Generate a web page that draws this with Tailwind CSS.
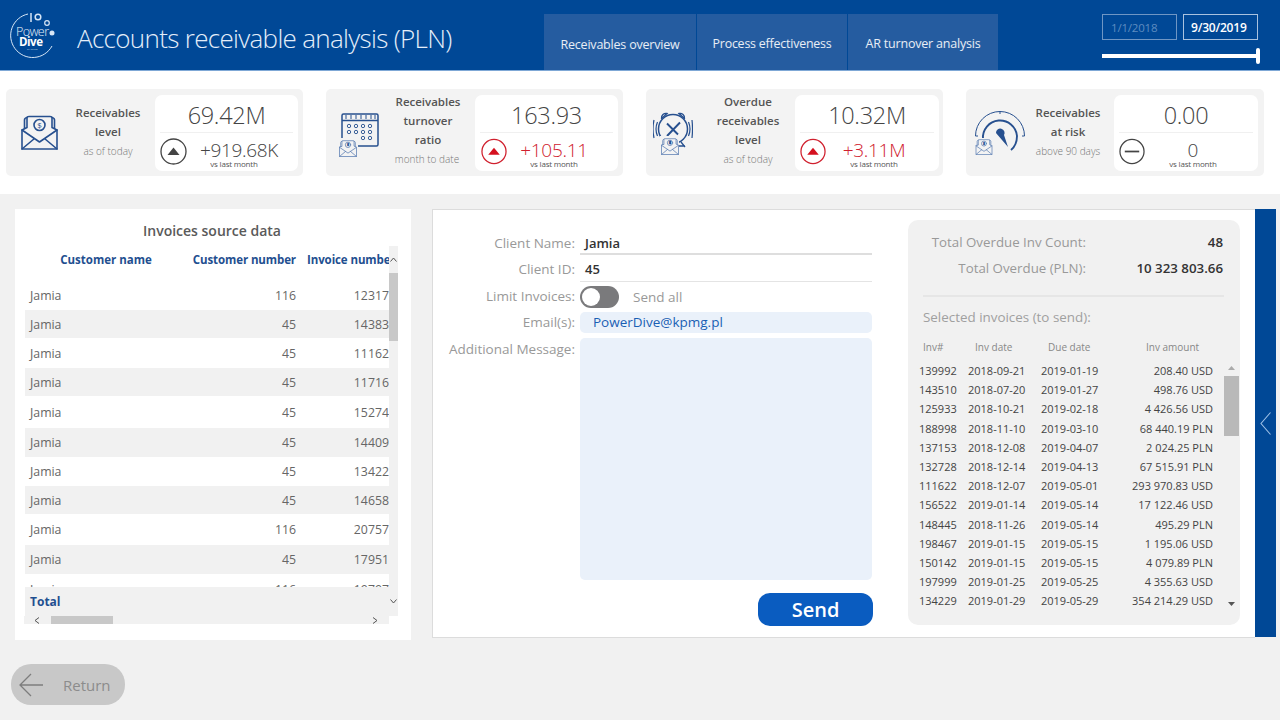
<!DOCTYPE html>
<html><head><meta charset="utf-8"><script src="https://cdn.jsdelivr.net/npm/@tailwindcss/browser@4"></script></head>
<body class="w-[1280px] h-[720px] overflow-hidden bg-[#f1f1f1] font-['Open_Sans',sans-serif]">
<svg width="0" height="0" class="absolute"><defs>
<symbol id="env" viewBox="0 0 37 35"><g fill="none" stroke="currentColor" stroke-width="1.6" stroke-linejoin="round" stroke-linecap="round"><path d="M1 15V34H36V15L31 12.5V2.5Q31 1.500 29 1.500H8Q6 1.500 6 2.500V12.500Z"/><path d="M6 2.500Q3.500 3 3.500 5V13.500M31 2.500Q33.500 3 33.500 5V13.500"/><path d="M1 15L18.500 27L36 15M1 34L13.500 23.500M36 34L23.500 23.500"/><circle cx="18.500" cy="10" r="5.500"/></g><text x="18.500" y="13" text-anchor="middle" font-size="8" fill="currentColor" font-family="Open Sans">$</text></symbol>
</defs></svg>

<header class="h-[71px] bg-[#004896] border-b border-[#7fa8d6] flex items-start">
  <div class="w-[77px] h-[70px] shrink-0">
    <svg width="60" height="60" viewBox="0 0 60 60" fill="none" stroke="#d7e6f6" class="block">
      <path d="M28 14A22 22 0 1 0 52 46" stroke-width="1"/>
      <path d="M31 13V22" stroke-width="1.500"/><circle cx="38" cy="17" r="2.800" stroke-width="1.500"/><circle cx="47" cy="23" r="2.300" stroke-width="1.200"/><circle cx="52" cy="33" r="2.500" fill="#d7e6f6" stroke="none"/>
      <text x="16" y="36" font-size="12.500" fill="#e6f0fa" stroke="none" font-family="Open Sans" font-weight="300" textLength="33">Power</text>
      <text x="19" y="46" font-size="11.500" fill="#fff" stroke="none" font-family="Open Sans" font-weight="700" textLength="24">Dive</text>
      <text x="27" y="50" font-size="2.500" fill="#cfe0f2" stroke="none" font-family="Open Sans">by KPMG</text>
    </svg>
  </div>
  <h1 class="w-[467px] shrink-0 pt-[19px] text-[26px] leading-[38px] font-light text-[#e4eefa] tracking-[-0.680px] whitespace-nowrap">Accounts receivable analysis (PLN)</h1>
  <nav class="flex gap-px mt-[14px] text-white/90">
    <div class="w-[152px] h-[56px] bg-[#255ca0] text-[12.500px] flex items-center justify-center pt-[7px] tracking-[-0.200px]">Receivables overview</div>
    <div class="w-[150px] h-[56px] bg-[#255ca0] text-[12.400px] flex items-center justify-center pt-[5px] tracking-[-0.200px]">Process effectiveness</div>
    <div class="w-[150px] h-[56px] bg-[#255ca0] text-[12.500px] flex items-center justify-center pt-[5px] tracking-[-0.200px]">AR turnover analysis</div>
  </nav>
  <div class="ml-[104px] w-[158px] mt-[14px]">
    <div class="flex gap-[6px]">
      <div class="w-[75px] h-[26px] border border-[#6f96c4] text-[#5e8cc0] text-[11.500px] flex items-center pl-[8px] pt-[1px] tracking-[-0.200px]">1/1/2018</div>
      <div class="w-[75px] h-[26px] border border-[#a9c2df] text-white text-[12px] font-semibold flex items-center pl-[7px] pt-[1px] tracking-[-0.200px]">9/30/2019</div>
    </div>
    <div class="mt-[8px] h-[16px] flex items-center"><div class="w-[154px] h-[4px] bg-white"></div><div class="w-[4px] h-[16px] bg-white rounded-[2px]"></div></div>
  </div>
</header>

<section class="h-[123px] bg-white flex gap-[23px] pl-[6px] pt-[18px]">
  <!-- card 1 -->
  <div class="w-[297px] h-[87px] bg-[#f3f3f3] rounded-[5px] flex items-center">
    <div class="w-[64px] pl-[15px] text-[#27508f]"><svg width="37" height="35"><use href="#env"/></svg></div>
    <div class="w-[76px] text-center mb-[2px]"><p class="text-[11.500px] leading-[19px] font-semibold text-[#555]">Receivables</p><p class="text-[11.500px] leading-[19px] font-semibold text-[#555]">level</p><p class="text-[10px] leading-[20px] font-light text-[#777]">as of today</p></div>
    <div class="relative ml-[9px] w-[143px] h-[76px] bg-white rounded-[7px]">
      <div class="h-[38px] border-b border-[#f0f0f0] mx-[5px] flex items-center justify-center text-[23.500px] font-light text-[#444] tracking-[-0.300px] pt-[6px]">69.42M</div>
      <div class="flex items-center h-[38px] pl-[5px]">
        <svg width="27" height="27" viewBox="0 0 27 27" class="shrink-0"><circle cx="13.500" cy="13.500" r="12.500" fill="none" stroke="#444" stroke-width="1.300"/><path d="M7.500 17L13.500 9.500L19.500 17Z" fill="#444"/></svg>
        <div class="w-[104px] text-center pt-[5px]"><p class="text-[19px] leading-[20px] font-light text-[#444] tracking-[-0.300px] whitespace-nowrap">+919.68K</p><p class="text-[8px] leading-[8px] text-[#555] -ml-[10px] tracking-[-0.200px]">vs last month</p></div>
      </div>
    </div>
  </div>
  <!-- card 2 -->
  <div class="w-[297px] h-[87px] bg-[#f3f3f3] rounded-[5px] flex items-center">
    <div class="w-[64px] pl-[12px] pt-[5px] text-[#27508f]">
      <svg width="42" height="46" viewBox="0 0 42 46" fill="none" stroke="#27508f"><rect x="4" y="2" width="36" height="32" rx="1.500" stroke-width="1.500"/><path d="M4 8.500H40" stroke-width="1.500"/><path d="M8 3V7M13 3V7M18 3V7M23 3V7M28 3V7M33 3V7M37 3V7" stroke-width="1"/>
        <g stroke-width=".900"><circle cx="11" cy="14" r="1.700"/><circle cx="18" cy="14" r="1.700"/><circle cx="25" cy="14" r="1.700"/><circle cx="32" cy="14" r="1.700"/><circle cx="11" cy="20" r="1.700"/><circle cx="18" cy="20" r="1.700"/><circle cx="25" cy="20" r="1.700"/><circle cx="32" cy="20" r="1.700"/><circle cx="25" cy="26" r="1.700"/><circle cx="32" cy="26" r="1.700"/></g>
        <rect x="0" y="26" width="20" height="20" fill="#f3f3f3" stroke="none"/>
        <svg x="1" y="28" width="18" height="17" class="text-[#5d7fb3]"><use href="#env"/></svg></svg>
    </div>
    <div class="w-[76px] text-center mb-[5px]"><p class="text-[11.500px] leading-[19px] font-semibold text-[#555]">Receivables</p><p class="text-[11.500px] leading-[19px] font-semibold text-[#555]">turnover</p><p class="text-[11.500px] leading-[19px] font-semibold text-[#555]">ratio</p><p class="text-[10px] leading-[20px] font-light text-[#777] -ml-[2px]">month to date</p></div>
    <div class="relative ml-[9px] w-[143px] h-[76px] bg-white rounded-[7px]">
      <div class="h-[38px] border-b border-[#f0f0f0] mx-[5px] flex items-center justify-center text-[23.500px] font-light text-[#444] tracking-[-0.300px] pt-[6px]">163.93</div>
      <div class="flex items-center h-[38px] pl-[6px]">
        <svg width="26" height="27" viewBox="0 0 27 27" class="shrink-0"><circle cx="13.500" cy="13.500" r="12.500" fill="none" stroke="#d0202e" stroke-width="1.300"/><path d="M7.500 17L13.500 9.500L19.500 17Z" fill="#d5101f"/></svg>
        <div class="w-[94px] text-center pt-[5px]"><p class="text-[19px] leading-[20px] font-light text-[#d0202e] tracking-[-0.300px] whitespace-nowrap">+105.11</p><p class="text-[8px] leading-[8px] text-[#555] tracking-[-0.200px]">vs last month</p></div>
      </div>
    </div>
  </div>
  <!-- card 3 -->
  <div class="w-[297px] h-[87px] bg-[#f3f3f3] rounded-[5px] flex items-center">
    <div class="w-[64px] pl-[7px]">
      <svg width="40" height="48" viewBox="0 0 40 48" fill="none" stroke="#27508f" stroke-width="1.500"><circle cx="20" cy="20" r="14.500"/><path d="M8.500 9.500A4.500 4.500 0 0 1 14 4.500ZM31.500 9.500A4.500 4.500 0 0 0 26 4.500Z" stroke-width="1.300"/><path d="M14 14.500L25 25.500M27 13.500L14 27" stroke-width="1.900"/><path d="M4.500 13Q1.500 20 4.500 27M1 11Q-1 20 1 29M35.500 13Q38.500 20 35.500 27M39 11Q40 20 39 29" stroke-width="1.200"/><path d="M28 33L32 38M25 37H32" stroke-width="1.300"/><rect x="7" y="27" width="19" height="21" fill="#f3f3f3" stroke="none"/><svg x="8" y="29" width="18" height="17" class="text-[#5d7fb3]" stroke-width="1.600"><use href="#env"/></svg></svg>
    </div>
    <div class="w-[76px] text-center mb-[5px]"><p class="text-[11.500px] leading-[19px] font-semibold text-[#555]">Overdue</p><p class="text-[11.500px] leading-[19px] font-semibold text-[#555]">receivables</p><p class="text-[11.500px] leading-[19px] font-semibold text-[#555]">level</p><p class="text-[10px] leading-[20px] font-light text-[#777]">as of today</p></div>
    <div class="relative ml-[9px] w-[144px] h-[76px] bg-white rounded-[7px]">
      <div class="h-[38px] border-b border-[#f0f0f0] mx-[5px] flex items-center justify-center text-[23.500px] font-light text-[#444] tracking-[-0.300px] pt-[6px]">10.32M</div>
      <div class="flex items-center h-[38px] pl-[5px]">
        <svg width="26" height="27" viewBox="0 0 27 27" class="shrink-0"><circle cx="13.500" cy="13.500" r="12.500" fill="none" stroke="#d0202e" stroke-width="1.300"/><path d="M7.500 17L13.500 9.500L19.500 17Z" fill="#d5101f"/></svg>
        <div class="w-[96px] text-center pt-[5px]"><p class="text-[19px] leading-[20px] font-light text-[#d0202e] tracking-[-0.300px] whitespace-nowrap">+3.11M</p><p class="text-[8px] leading-[8px] text-[#555] tracking-[-0.200px]">vs last month</p></div>
      </div>
    </div>
  </div>
  <!-- card 4 -->
  <div class="w-[298px] h-[87px] bg-[#f3f3f3] rounded-[5px] flex items-center">
    <div class="w-[64px] pl-[8px]">
      <svg width="52" height="48" viewBox="0 0 52 48" fill="none" stroke="#27508f"><path d="M1.500 27A24.500 24.500 0 0 1 50.500 27M1.500 27H4M50.500 27H48M26 2.500V5" stroke-width="1"/><path d="M9 30A17 17 0 0 1 43 27Q43 36 37 41" stroke-width="1.900"/><path d="M22 24A4.300 4.300 0 1 1 30 26L34 38Z" fill="#27508f" stroke="none"/><rect x="0" y="29" width="20" height="19" fill="#f3f3f3" stroke="none"/><svg x="1" y="30" width="18" height="16" class="text-[#5d7fb3]"><use href="#env"/></svg></svg>
    </div>
    <div class="w-[76px] text-center mb-[2px]"><p class="text-[11.500px] leading-[19px] font-semibold text-[#555]">Receivables</p><p class="text-[11.500px] leading-[19px] font-semibold text-[#555]">at risk</p><p class="text-[10px] leading-[20px] font-light text-[#777]">above 90 days</p></div>
    <div class="relative ml-[8px] w-[144px] h-[76px] bg-white rounded-[7px]">
      <div class="h-[38px] border-b border-[#f0f0f0] mx-[5px] flex items-center justify-center text-[23.500px] font-light text-[#444] tracking-[-0.300px] pt-[6px]">0.00</div>
      <div class="flex items-center h-[38px] pl-[5px]">
        <svg width="26" height="27" viewBox="0 0 27 27" class="shrink-0"><circle cx="13.500" cy="13.500" r="12.500" fill="none" stroke="#444" stroke-width="1.300"/><path d="M6 13.500H21" stroke="#444" stroke-width="1.800"/></svg>
        <div class="w-[96px] text-center pt-[5px]"><p class="text-[19px] leading-[20px] font-light text-[#444] whitespace-nowrap">0</p><p class="text-[8px] leading-[8px] text-[#555] tracking-[-0.200px]">vs last month</p></div>
      </div>
    </div>
  </div>
</section>

<main class="flex items-start pt-[15px] pl-[15px]">
  <!-- left table -->
  <div class="w-[396px] h-[431px] bg-white">
    <h2 class="h-[37px] pt-[12px] text-center text-[14px] leading-[20px] font-semibold text-[#5a5a5a] pr-[2px]">Invoices source data</h2>
    <div class="flex ml-[10px] h-[370px]">
      <div class="w-[364px] flex flex-col text-[12.300px] text-[#666] overflow-hidden">
        <div class="h-[36px] flex pb-[8px] items-center text-[11.500px] font-bold text-[#1f4f90] whitespace-nowrap"><span class="w-[162px] text-center">Customer name</span><span class="w-[109px] text-right tracking-[-0.100px]">Customer number</span><span class="w-[93px] pl-[11px] overflow-hidden tracking-[-0.100px]">Invoice number</span></div>
        <div class="h-[28px] shrink-0 flex items-center bg-white"><span class="w-[162px] pl-[5px]">Jamia</span><span class="w-[109px] text-right">116</span><span class="w-[93px] text-right">12317</span></div>
        <div class="h-[28px] shrink-0 flex items-center pt-[2px] bg-[#f1f1f1]"><span class="w-[162px] pl-[5px]">Jamia</span><span class="w-[109px] text-right">45</span><span class="w-[93px] text-right">14383</span></div>
        <div class="h-[30px] shrink-0 flex items-center pt-[2px] bg-white"><span class="w-[162px] pl-[5px]">Jamia</span><span class="w-[109px] text-right">45</span><span class="w-[93px] text-right">11162</span></div>
        <div class="h-[28px] shrink-0 flex items-center pt-[2px] bg-[#f1f1f1]"><span class="w-[162px] pl-[5px]">Jamia</span><span class="w-[109px] text-right">45</span><span class="w-[93px] text-right">11716</span></div>
        <div class="h-[32px] shrink-0 flex items-center pt-[2px] bg-white"><span class="w-[162px] pl-[5px]">Jamia</span><span class="w-[109px] text-right">45</span><span class="w-[93px] text-right">15274</span></div>
        <div class="h-[29px] shrink-0 flex items-center pt-[2px] bg-[#f1f1f1]"><span class="w-[162px] pl-[5px]">Jamia</span><span class="w-[109px] text-right">45</span><span class="w-[93px] text-right">14409</span></div>
        <div class="h-[29px] shrink-0 flex items-center pt-[2px] bg-white"><span class="w-[162px] pl-[5px]">Jamia</span><span class="w-[109px] text-right">45</span><span class="w-[93px] text-right">13422</span></div>
        <div class="h-[28px] shrink-0 flex items-center pt-[2px] bg-[#f1f1f1]"><span class="w-[162px] pl-[5px]">Jamia</span><span class="w-[109px] text-right">45</span><span class="w-[93px] text-right">14658</span></div>
        <div class="h-[31px] shrink-0 flex items-center pt-[2px] bg-white"><span class="w-[162px] pl-[5px]">Jamia</span><span class="w-[109px] text-right">116</span><span class="w-[93px] text-right">20757</span></div>
        <div class="h-[29px] shrink-0 flex items-center pt-[2px] bg-[#f1f1f1]"><span class="w-[162px] pl-[5px]">Jamia</span><span class="w-[109px] text-right">45</span><span class="w-[93px] text-right">17951</span></div>
        <div class="h-[13px] shrink-0 flex items-start pt-[7px] overflow-hidden bg-white"><span class="w-[162px] pl-[5px]">Jamia</span><span class="w-[109px] text-right">116</span><span class="w-[93px] text-right">19797</span></div>
        <div class="h-[29px] shrink-0 flex items-center bg-[#f1f1f1] pl-[5px] text-[12px] font-bold text-[#1f4f90]">Total</div>
      </div>
      <div class="w-[9px] h-[370px] bg-[#f1f1f1] flex flex-col items-center text-[#555]">
        <div class="h-[27px] flex items-center"><svg width="7" height="5" viewBox="0 0 7 5" fill="none" stroke="#555"><path d="M.5 4.500L3.500 1L6.500 4.500"/></svg></div>
        <div class="w-[9px] h-[68px] bg-[#c8c8c8]"></div>
        <div class="mt-auto h-[29px] flex items-center"><svg width="7" height="5" viewBox="0 0 7 5" fill="none" stroke="#555"><path d="M.5 .5L3.500 4L6.500 .5"/></svg></div>
      </div>
    </div>
    <div class="ml-[9px] w-[365px] h-[8px] bg-[#f1f1f1] flex items-center">
      <svg width="6" height="7" viewBox="0 0 6 7" fill="none" stroke="#555" class="ml-[10px]"><path d="M5 .5L1 3.500L5 6.500"/></svg>
      <div class="ml-[11px] w-[62px] h-[8px] bg-[#c8c8c8]"></div>
      <svg width="6" height="7" viewBox="0 0 6 7" fill="none" stroke="#555" class="ml-auto mr-[11px]"><path d="M1 .5L5 3.500L1 6.500"/></svg>
    </div>
    <div class="mt-[40px] w-[114px] h-[41px] -ml-[4px] bg-[#c8c8c8] rounded-[20px] flex items-center pl-[8px]">
      <svg width="24" height="24" viewBox="0 0 24 24" fill="none" stroke="#7d7d7d" stroke-width="1.300"><path d="M12 1L1 12L12 23M1 12H24"/></svg>
      <span class="ml-[20px] text-[15px] pt-[2px] text-[#8c8c8c]">Return</span>
    </div>
  </div>

  <!-- form panel -->
  <div class="ml-[21px] w-[823px] h-[429px] bg-white border border-[#dcdcdc] border-r-0 flex">
    <div class="w-[475px] shrink-0 flex flex-col text-[13.500px] text-[#999]">
      <div class="flex h-[45px] pt-[20px]"><span class="w-[142px] text-right leading-[26px]">Client Name:</span><span class="ml-[5px] w-[292px] h-[25px] border-b-2 border-[#dedede] pl-[5px] leading-[27px] text-[13px] font-semibold text-[#333]">Jamia</span></div>
      <div class="flex h-[27px] "><span class="w-[142px] text-right leading-[28px]">Client ID:</span><span class="ml-[5px] w-[292px] h-[27px] border-b border-[#e4e4e4] pl-[5px] leading-[29px] text-[13px] font-semibold text-[#333]">45</span></div>
      <div class="flex h-[30px] items-start pt-[4px]"><span class="w-[142px] text-right leading-[20px]">Limit Invoices:</span>
        <span class="ml-[5px] w-[39px] h-[22px] rounded-full bg-[#7a7a7c] flex items-center pl-[2px]"><span class="w-[18px] h-[18px] rounded-full bg-white"></span></span><span class="ml-[14px] leading-[22px]">Send all</span></div>
      <div class="flex h-[26px] items-start"><span class="w-[142px] text-right leading-[21px]">Email(s):</span><span class="ml-[5px] w-[292px] h-[21px] rounded-[5px] bg-[#eaf1fa] pl-[13px] leading-[21px] font-medium text-[#1a5fb4]">PowerDive@kpmg.pl</span></div>
      <div class="flex h-[242px] items-start"><span class="w-[142px] text-right leading-[22px]">Additional Message:</span><span class="ml-[5px] w-[292px] h-[242px] rounded-[5px] bg-[#eaf1fa]"></span></div>
      <div class="mt-[13px] ml-[325px] w-[115px] h-[33px] rounded-[12px] bg-[#0a5cc0] flex items-center justify-center text-[20px] font-semibold text-white">Send</div>
    </div>
    <div class="ml-[0px] mt-[10px] w-[332px] h-[405px] bg-[#f1f1f1] rounded-[10px] flex flex-col">
      <div class="flex h-[26px] mt-[10px] items-center text-[13.300px]"><span class="w-[178px] text-right text-[#999]">Total Overdue Inv Count:</span><span class="w-[137px] text-right font-semibold text-[#333]">48</span></div>
      <div class="flex h-[26px] items-center text-[13.300px]"><span class="w-[178px] text-right text-[#999]">Total Overdue (PLN):</span><span class="w-[137px] text-right font-semibold text-[#333]">10 323 803.66</span></div>
      <div class="mt-[13px] ml-[15px] w-[301px] h-[2px] bg-[#e6e6e6]"></div>
      <div class="mt-[10px] ml-[15px] text-[13.400px] leading-[20px] text-[#a0a0a0]">Selected invoices (to send):</div>
      <div class="mt-[10px] h-[20px] flex items-center text-[10px] text-[#888]"><span class="ml-[15px] w-[52px]">Inv#</span><span class="w-[73px]">Inv date</span><span class="w-[98px]">Due date</span><span>Inv amount</span></div>
      <div class="flex mt-[4px]">
        <div class="w-[305px] text-[11px] leading-[19.200px] text-[#444] tabular-nums whitespace-nowrap">
          <div class="flex"><span class="ml-[11px] w-[49px]">139992</span><span class="w-[73px]">2018-09-21</span><span class="w-[60px]">2019-01-19</span><span class="w-[112px] text-right">208.40 USD</span></div>
          <div class="flex"><span class="ml-[11px] w-[49px]">143510</span><span class="w-[73px]">2018-07-20</span><span class="w-[60px]">2019-01-27</span><span class="w-[112px] text-right">498.76 USD</span></div>
          <div class="flex"><span class="ml-[11px] w-[49px]">125933</span><span class="w-[73px]">2018-10-21</span><span class="w-[60px]">2019-02-18</span><span class="w-[112px] text-right">4 426.56 USD</span></div>
          <div class="flex"><span class="ml-[11px] w-[49px]">188998</span><span class="w-[73px]">2018-11-10</span><span class="w-[60px]">2019-03-10</span><span class="w-[112px] text-right">68 440.19 PLN</span></div>
          <div class="flex"><span class="ml-[11px] w-[49px]">137153</span><span class="w-[73px]">2018-12-08</span><span class="w-[60px]">2019-04-07</span><span class="w-[112px] text-right">2 024.25 PLN</span></div>
          <div class="flex"><span class="ml-[11px] w-[49px]">132728</span><span class="w-[73px]">2018-12-14</span><span class="w-[60px]">2019-04-13</span><span class="w-[112px] text-right">67 515.91 PLN</span></div>
          <div class="flex"><span class="ml-[11px] w-[49px]">111622</span><span class="w-[73px]">2018-12-07</span><span class="w-[60px]">2019-05-01</span><span class="w-[112px] text-right">293 970.83 USD</span></div>
          <div class="flex"><span class="ml-[11px] w-[49px]">156522</span><span class="w-[73px]">2019-01-14</span><span class="w-[60px]">2019-05-14</span><span class="w-[112px] text-right">17 122.46 USD</span></div>
          <div class="flex"><span class="ml-[11px] w-[49px]">148445</span><span class="w-[73px]">2018-11-26</span><span class="w-[60px]">2019-05-14</span><span class="w-[112px] text-right">495.29 PLN</span></div>
          <div class="flex"><span class="ml-[11px] w-[49px]">198467</span><span class="w-[73px]">2019-01-15</span><span class="w-[60px]">2019-05-15</span><span class="w-[112px] text-right">1 195.06 USD</span></div>
          <div class="flex"><span class="ml-[11px] w-[49px]">150142</span><span class="w-[73px]">2019-01-15</span><span class="w-[60px]">2019-05-15</span><span class="w-[112px] text-right">4 079.89 PLN</span></div>
          <div class="flex"><span class="ml-[11px] w-[49px]">197999</span><span class="w-[73px]">2019-01-25</span><span class="w-[60px]">2019-05-25</span><span class="w-[112px] text-right">4 355.63 USD</span></div>
          <div class="flex"><span class="ml-[11px] w-[49px]">134229</span><span class="w-[73px]">2019-01-29</span><span class="w-[60px]">2019-05-29</span><span class="w-[112px] text-right">354 214.29 USD</span></div>
        </div>
        <div class="ml-[11px] w-[15px] h-[245px] flex flex-col items-center">
          <div class="h-[9px] flex items-end"><svg width="7" height="4"><path d="M0 4L3.500 0L7 4Z" fill="#aaa"/></svg></div>
          <div class="mt-[6px] w-[15px] h-[60px] bg-[#b9b9b9]"></div>
          <div class="mt-auto"><svg width="7" height="4" class="block"><path d="M0 0L3.500 4L7 0Z" fill="#555"/></svg></div>
        </div>
      </div>
    </div>
  </div>
  <!-- side bar -->
  <div class="w-[21px] h-[428px] bg-[#004896] flex items-center justify-center pb-[0px]">
    <svg width="11" height="23" viewBox="0 0 11 23" fill="none" stroke="#9ec1e6" stroke-width="1.100"><path d="M10.500 .5L1 11.500L10.500 22.500"/></svg>
  </div>
</main>
</body></html>
